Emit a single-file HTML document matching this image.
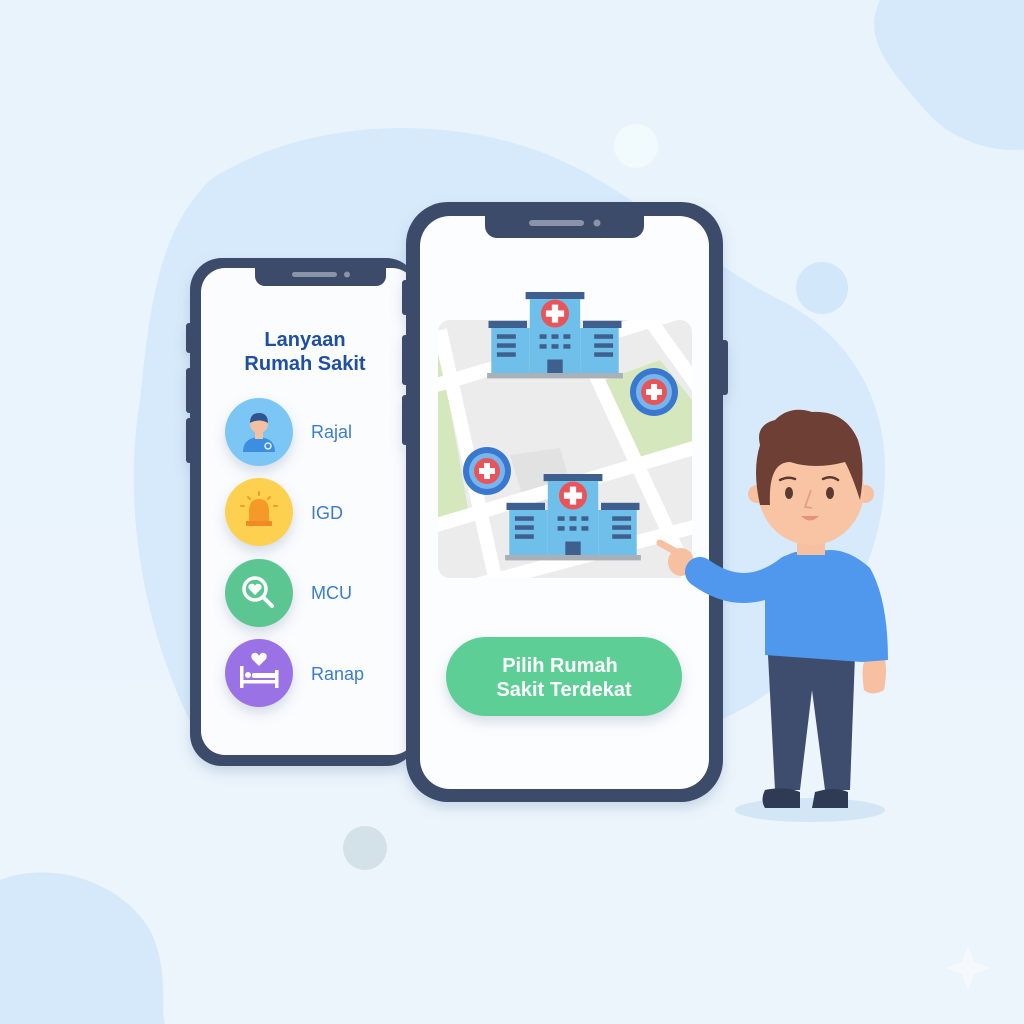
<!DOCTYPE html>
<html><head><meta charset="utf-8"><style>
html,body{margin:0;padding:0;width:1024px;height:1024px;overflow:hidden;background:#eaf4fc;font-family:"Liberation Sans",sans-serif}
svg{position:absolute;left:0;top:0}
</style></head><body>
<svg width="1024" height="1024" viewBox="0 0 1024 1024" xmlns="http://www.w3.org/2000/svg">
<defs>
<linearGradient id="bg" x1="0" y1="0" x2="0" y2="1"><stop offset="0" stop-color="#e8f3fc"/><stop offset="1" stop-color="#edf5fc"/></linearGradient>
<clipPath id="mapc"><rect x="438" y="320" width="254" height="258" rx="12"/></clipPath>
<filter id="sh" x="-30%" y="-30%" width="160%" height="160%"><feDropShadow dx="0" dy="6" stdDeviation="6" flood-color="#5a7aa0" flood-opacity="0.25"/></filter>
<g id="hosp">
 <rect x="-42" y="-80" width="84" height="8" fill="#3f5f8e"/>
 <rect x="-36" y="-72" width="72" height="82" fill="#6ec0ea"/>
 <rect x="-95" y="-48" width="55" height="8" fill="#3f5f8e"/>
 <rect x="40" y="-48" width="55" height="8" fill="#3f5f8e"/>
 <rect x="-91" y="-40" width="55" height="50" fill="#6ec0ea"/>
 <rect x="36" y="-40" width="55" height="50" fill="#6ec0ea"/>
 <ellipse cx="0" cy="-56" rx="20" ry="15.5" fill="#e9545a"/>
 <rect x="-4.5" y="-66" width="9" height="20" fill="#fff"/><rect x="-13" y="-59.5" width="26" height="7" fill="#fff"/>
 <g fill="#3f5f8e"><rect x="-83" y="-33" width="27" height="5"/><rect x="-83" y="-23" width="27" height="5"/><rect x="-83" y="-13" width="27" height="5"/>
 <rect x="56" y="-33" width="27" height="5"/><rect x="56" y="-23" width="27" height="5"/><rect x="56" y="-13" width="27" height="5"/>
 <rect x="-22" y="-33" width="10" height="5"/><rect x="-5" y="-33" width="10" height="5"/><rect x="12" y="-33" width="10" height="5"/>
 <rect x="-22" y="-22" width="10" height="5"/><rect x="-5" y="-22" width="10" height="5"/><rect x="12" y="-22" width="10" height="5"/>
 <rect x="-11" y="-5" width="22" height="15"/></g>
 <rect x="-97" y="10" width="194" height="6" fill="#a9b0b8"/>
</g>
<g id="pin"><circle r="24" fill="#3a78d0"/><circle r="18" fill="#76b6ec"/><circle r="13" fill="#e9545a"/><rect x="-3" y="-8" width="6" height="16" fill="#fff"/><rect x="-8" y="-3" width="16" height="6" fill="#fff"/></g>
</defs>
<rect width="1024" height="1024" fill="url(#bg)"/>
<path d="M880 0 H1024 V150 C990 152 950 140 925 110 C895 75 860 40 880 0Z" fill="#d6e9fb"/>
<path d="M0 880 C50 860 120 880 150 930 C170 970 160 1010 165 1024 H0Z" fill="#d6e9fb"/>
<path d="M210 180 C300 120 450 110 560 160 C640 195 700 260 780 300 C860 340 900 420 880 520 C860 620 790 690 720 720 L200 740 C150 650 120 520 140 400 C150 300 160 230 210 180Z" fill="#d7eafb"/>
<circle cx="822" cy="288" r="26" fill="#d2e7fa"/>
<circle cx="365" cy="848" r="22" fill="#d3e2e8"/>
<circle cx="636" cy="146" r="22" fill="#f3fbfd" opacity="0.8"/>
<path d="M968 945 L974 962 L990 968 L974 974 L968 991 L962 974 L946 968 L962 962Z" fill="#f5f9fd"/>
<ellipse cx="810" cy="810" rx="75" ry="12" fill="#d3e6f6"/>

<g filter="url(#sh)">
<rect x="186" y="323" width="8" height="30" rx="3" fill="#3d4b6b"/><rect x="186" y="368" width="8" height="45" rx="3" fill="#3d4b6b"/><rect x="186" y="418" width="8" height="45" rx="3" fill="#3d4b6b"/>
<rect x="190" y="258" width="228" height="508" rx="32" fill="#3d4b6b"/>
<rect x="201" y="268" width="215" height="487" rx="24" fill="#fbfcfe"/>
<path d="M255 268 H386 V276 a10 10 0 0 1 -10 10 H265 a10 10 0 0 1 -10 -10Z" fill="#3d4b6b"/>
<rect x="292" y="272" width="45" height="5" rx="2.5" fill="#8a94a8"/><circle cx="347" cy="274.5" r="3" fill="#8a94a8"/>
</g>
<text x="305" y="346" text-anchor="middle" font-size="20" font-weight="bold" fill="#1e4fa0">Lanyaan</text>
<text x="305" y="370" text-anchor="middle" font-size="20" font-weight="bold" fill="#1e4fa0">Rumah Sakit</text>
<g filter="url(#sh)">
<circle cx="259" cy="432" r="34" fill="#7cc6f6"/>
<circle cx="259" cy="512" r="34" fill="#fdd150"/>
<circle cx="259" cy="593" r="34" fill="#5cc693"/>
<circle cx="259" cy="673" r="34" fill="#9a72e6"/>
</g>
<path d="M243 452 Q243 438 259 437 Q275 438 275 452Z" fill="#3c8ee0"/>
<rect x="255" y="432" width="8" height="7" fill="#f4c0a2"/>
<circle cx="259" cy="424" r="9" fill="#f4c0a2"/>
<path d="M250 423 Q250 413 259 413 Q268 413 268 423 Q259 418 250 423Z" fill="#2f5590"/>
<circle cx="268" cy="446" r="3" fill="none" stroke="#fff" stroke-width="1.3"/>
<path d="M249 521 V511 Q249 499 259 499 Q269 499 269 511 V521Z" fill="#f59a2a"/>
<rect x="246" y="521" width="26" height="5" rx="1" fill="#f08a22"/>
<g stroke="#f59a2a" stroke-width="2" stroke-linecap="round"><line x1="259" y1="492" x2="259" y2="495"/><line x1="248" y1="497" x2="250" y2="499"/><line x1="270" y1="497" x2="268" y2="499"/><line x1="241" y1="506" x2="244" y2="506"/><line x1="274" y1="506" x2="277" y2="506"/></g>
<circle cx="255" cy="589" r="11" fill="none" stroke="#fff" stroke-width="3.5"/>
<line x1="263" y1="597" x2="272" y2="606" stroke="#fff" stroke-width="4" stroke-linecap="round"/>
<path d="M255 595 L249 589 Q247 585 251 584 Q254 583 255 586 Q256 583 259 584 Q263 585 261 589Z" fill="#fff"/>
<g fill="#fff"><rect x="240" y="666" width="3.5" height="22"/><rect x="275" y="670" width="3.5" height="18"/><rect x="240" y="680" width="38" height="3.5"/><circle cx="248" cy="675" r="3"/><rect x="252" y="673" width="24" height="5" rx="2"/>
<path d="M259 666 L252 659 Q250 654 254 653 Q257 652 259 656 Q261 652 264 653 Q268 654 266 659Z"/></g>
<g font-size="18" fill="#3a7bd5"><text x="311" y="438">Rajal</text><text x="311" y="519">IGD</text><text x="311" y="599">MCU</text><text x="311" y="680">Ranap</text></g>

<g filter="url(#sh)">
<rect x="402" y="280" width="8" height="35" rx="3" fill="#3d4b6b"/><rect x="402" y="335" width="8" height="50" rx="3" fill="#3d4b6b"/><rect x="402" y="395" width="8" height="50" rx="3" fill="#3d4b6b"/>
<rect x="720" y="340" width="8" height="55" rx="3" fill="#3d4b6b"/>
<rect x="406" y="202" width="317" height="600" rx="42" fill="#3d4b6b"/>
<rect x="420" y="216" width="289" height="573" rx="30" fill="#fcfdfe"/>
<path d="M485 216 H644 V226 a12 12 0 0 1 -12 12 H497 a12 12 0 0 1 -12 -12Z" fill="#3d4b6b"/>
<rect x="529" y="220" width="55" height="6" rx="3" fill="#8a94a8"/><circle cx="597" cy="223" r="3.5" fill="#8a94a8"/>
</g>
<g clip-path="url(#mapc)">
<rect x="438" y="320" width="254" height="258" fill="#ececec"/>
<path d="M438 340 L470 520 L438 530Z" fill="#d5e7bc"/>
<path d="M592 385 L660 360 L692 400 L692 450 L640 470Z" fill="#d5e7bc"/>
<path d="M510 455 L560 448 L575 500 L530 520Z" fill="#e2e2e2"/>
<g stroke="#fff" stroke-width="14" fill="none">
<line x1="420" y1="390" x2="720" y2="300"/>
<line x1="420" y1="530" x2="720" y2="440"/>
<line x1="420" y1="600" x2="720" y2="520"/>
<line x1="440" y1="330" x2="500" y2="600"/>
<line x1="570" y1="320" x2="700" y2="600"/>
<line x1="650" y1="320" x2="700" y2="390"/>
</g>
</g>
<use href="#hosp" transform="translate(555,364) scale(0.7,0.9)"/>
<use href="#hosp" transform="translate(573,546) scale(0.7,0.9)"/>
<use href="#pin" x="654" y="392"/>
<use href="#pin" x="487" y="471"/>
<g filter="url(#sh)"><rect x="446" y="637" width="236" height="79" rx="39.5" fill="#5dcf96"/></g>
<text x="560" y="672" text-anchor="middle" font-size="20" fill="#fff" font-weight="bold">Pilih Rumah</text>
<text x="564" y="696" text-anchor="middle" font-size="20" fill="#fff" font-weight="bold">Sakit Terdekat</text>

<!-- person -->
<path d="M768 655 L855 655 L850 790 L825 790 L812 690 L800 790 L775 790Z" fill="#3e4c6e"/>
<path d="M765 790 Q785 786 800 792 L800 808 L765 808 Q760 800 765 790Z" fill="#2f3b55"/>
<path d="M815 792 Q835 786 848 792 L848 808 L812 808Z" fill="#2f3b55"/>
<path d="M867 655 Q860 665 864 690 Q872 697 884 690 Q888 670 884 655Z" fill="#f7c0a0"/>
<line x1="678" y1="553" x2="660" y2="543" stroke="#f7c0a0" stroke-width="7" stroke-linecap="round"/>
<ellipse cx="681" cy="562" rx="13" ry="14" fill="#f7c0a0"/>
<path d="M790 570 Q745 605 700 572" stroke="#4f98ee" stroke-width="30" fill="none" stroke-linecap="round"/>
<path d="M795 552 Q775 558 765 580 L765 655 L862 662 L888 660 Q888 600 870 568 Q850 550 830 550Z" fill="#4f98ee"/>
<rect x="797" y="535" width="28" height="20" fill="#f7c0a0"/>
<circle cx="757" cy="494" r="9" fill="#f7c0a0"/><circle cx="865" cy="494" r="9" fill="#f7c0a0"/>
<ellipse cx="811" cy="490" rx="53" ry="55" fill="#f8c4a4"/>
<path d="M760 505 Q752 470 760 445 Q755 425 775 420 Q790 405 812 412 Q845 410 858 440 Q866 465 860 500 Q852 475 845 462 Q815 470 790 462 Q768 462 770 505Z" fill="#6e3f35"/>
<ellipse cx="789" cy="493" rx="4" ry="6" fill="#5a3a30"/><ellipse cx="830" cy="493" rx="4" ry="6" fill="#5a3a30"/>
<path d="M780 480 Q788 476 795 479" stroke="#5a3a30" stroke-width="2.5" fill="none" stroke-linecap="round"/>
<path d="M823 479 Q831 475 838 480" stroke="#5a3a30" stroke-width="2.5" fill="none" stroke-linecap="round"/>
<path d="M811 490 L805 507 L812 508" stroke="#e5a080" stroke-width="1.8" fill="none"/>
<path d="M801 516 Q810 525 819 516Z" fill="#e8907a"/>
</svg>
</body></html>
